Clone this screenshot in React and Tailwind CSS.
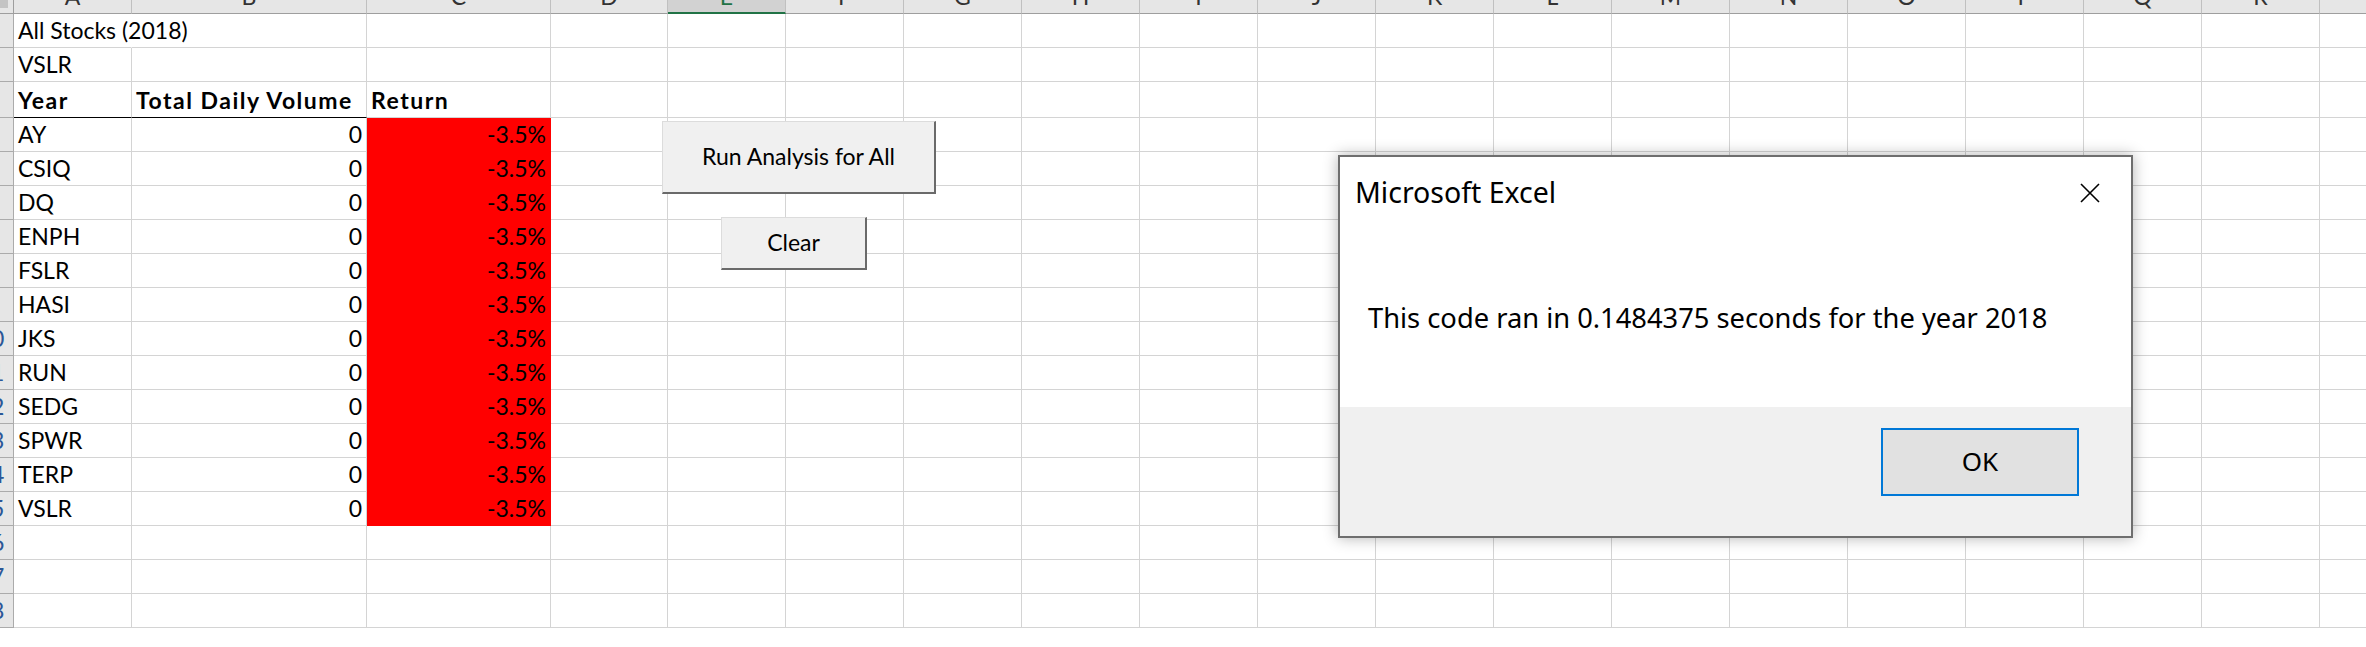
import React from 'react';

const COLS = [
  { id: 'A', w: 'w-[118px]' },
  { id: 'B', w: 'w-[235px]' },
  { id: 'C', w: 'w-[184px]' },
  { id: 'D', w: 'w-[117px]' },
  { id: 'E', w: 'w-[118px]' },
  { id: 'F', w: 'w-[118px]' },
  { id: 'G', w: 'w-[118px]' },
  { id: 'H', w: 'w-[118px]' },
  { id: 'I', w: 'w-[118px]' },
  { id: 'J', w: 'w-[118px]' },
  { id: 'K', w: 'w-[118px]' },
  { id: 'L', w: 'w-[118px]' },
  { id: 'M', w: 'w-[118px]' },
  { id: 'N', w: 'w-[118px]' },
  { id: 'O', w: 'w-[118px]' },
  { id: 'P', w: 'w-[118px]' },
  { id: 'Q', w: 'w-[118px]' },
  { id: 'R', w: 'w-[118px]' },
  { id: 'S', w: 'w-[118px]' },
];

const TICKERS = ['AY', 'CSIQ', 'DQ', 'ENPH', 'FSLR', 'HASI', 'JKS', 'RUN', 'SEDG', 'SPWR', 'TERP', 'VSLR'];

const ROWS = Array.from({ length: 18 }, (_, i) => i + 1);

function cellText(row, col) {
  if (row === 1 && col === 'A') return 'All Stocks (2018)';
  if (row === 2 && col === 'A') return 'VSLR';
  if (row === 3) return { A: 'Year', B: 'Total Daily Volume', C: 'Return' }[col] || null;
  if (row >= 4 && row <= 15) {
    if (col === 'A') return TICKERS[row - 4];
    if (col === 'B') return '0';
    if (col === 'C') return '-3.5%';
  }
  return null;
}

function cellClass(row, col) {
  const isData = row >= 4 && row <= 15;
  if (isData && col === 'C') return 'bg-[#ff0000] border-[#ff0000] justify-end';
  if (isData && col === 'B') return 'border-[#d4d4d4] justify-end';
  if (row === 3 && (col === 'A' || col === 'B')) return 'border-r-[#d4d4d4] border-b-black font-bold tracking-[1.5px]';
  if (row === 3) return 'border-[#d4d4d4] font-bold tracking-[1.5px]';
  if (row === 1 && col === 'A') return 'border-r-transparent border-b-[#d4d4d4] overflow-visible';
  return 'border-[#d4d4d4]';
}

function HeaderRow() {
  return (
    <div className="flex h-[14px] shrink-0">
      <div className="shrink-0 w-[14px] h-full bg-[#e6e6e6] border-r border-b border-[#9e9e9e]">
        <div className="w-[8px] h-[8px] bg-[#c4c4c4]" />
      </div>
      {COLS.map((c) => (
        <div
          key={c.id}
          className={`shrink-0 h-full overflow-hidden text-center border-r border-r-[#c0c0c0] ${c.w} ${
            c.id === 'E'
              ? 'bg-[#d2d2d2] text-[#217346] border-b-2 border-b-[#217346]'
              : 'bg-[#e6e6e6] text-[#333333] border-b border-b-[#9e9e9e]'
          }`}
        >
          <div className="leading-[28px] -mt-[18px]">{c.id}</div>
        </div>
      ))}
    </div>
  );
}

function SheetRow({ row }) {
  return (
    <div className={`flex shrink-0 ${row === 3 ? 'h-[36px]' : 'h-[34px]'}`}>
      <div className="shrink-0 w-[14px] h-full overflow-hidden flex justify-end items-end pb-[5px] bg-[#e6e6e6] border-r border-b border-[#ababab]">
        <div className="shrink-0 w-[44px] text-center leading-none text-[#2b5797]">{row}</div>
      </div>
      {COLS.map((c) => (
        <div
          key={c.id}
          className={`shrink-0 h-full flex items-end pb-[5px] px-[4px] whitespace-nowrap border-r border-b leading-none ${c.w} ${cellClass(row, c.id)}`}
        >
          {cellText(row, c.id)}
        </div>
      ))}
    </div>
  );
}

function SheetButton({ className, children }) {
  return (
    <div
      className={`absolute flex items-center justify-center bg-[#f0f0f0] border-l border-t border-l-[#dcdcdc] border-t-[#dcdcdc] border-r-2 border-b-2 border-r-[#6a6a6a] border-b-[#6a6a6a] text-black leading-[1.2] ${className}`}
    >
      {children}
    </div>
  );
}

function MessageBox() {
  return (
    <div className="absolute left-[1338px] top-[155px] w-[795px] h-[383px] border-2 border-[#6e6e6e] bg-white shadow-[0_0_14px_rgba(0,0,0,0.3)] flex flex-col [font-family:'Noto_Sans',sans-serif] text-black">
      <div className="h-[250px] flex flex-col">
        <div className="flex justify-between items-start pt-[16px] pl-[15px] pr-[31px]">
          <div className="text-[28.5px] leading-[38px]">Microsoft Excel</div>
          <svg className="mt-[10px]" width="20" height="20" viewBox="0 0 20 20">
            <path d="M1 1 L19 19 M19 1 L1 19" stroke="#000" strokeWidth="1.6" fill="none" />
          </svg>
        </div>
        <div className="mt-[88px] pl-[28px] text-[27.3px] leading-[38px] whitespace-nowrap">
          This code ran in 0.1484375 seconds for the year 2018
        </div>
      </div>
      <div className="flex-1 bg-[#f0f0f0] flex justify-end items-start pt-[21px] pr-[52px]">
        <div className="w-[198px] h-[68px] border-2 border-[#0078d7] bg-[#e1e1e1] flex items-center justify-center text-[26px] leading-[1.36]">
          OK
        </div>
      </div>
    </div>
  );
}

export default function App() {
  return (
    <div className="relative w-[2366px] h-[647px] overflow-hidden bg-white text-black text-[23px] [font-family:Lato,sans-serif]">
      <div className="flex flex-col">
        <HeaderRow />
        {ROWS.map((r) => (
          <SheetRow key={r} row={r} />
        ))}
      </div>
      <SheetButton className="left-[662px] top-[121px] w-[274px] h-[73px]">Run Analysis for All</SheetButton>
      <SheetButton className="left-[721px] top-[217px] w-[146px] h-[53px]">Clear</SheetButton>
      <MessageBox />
    </div>
  );
}
